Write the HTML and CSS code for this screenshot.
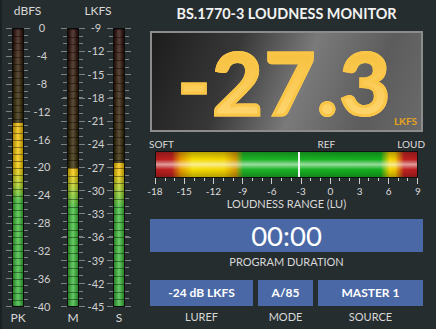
FILE: index.html
```html
<!DOCTYPE html>
<html lang="en">
<head>
    <meta charset="UTF-8">
    <title>Loudness Monitor</title>
    <link rel="stylesheet" href="styles.css">
</head>
<body>
    <div class="meters">
        <div class="meter-head head-db">dBFS</div>
        <div class="meter-head head-lk">LKFS</div>

        <div class="ticks ticks-left db"></div>
        <div class="bar db"><div class="fill" style="height: 66%"></div></div>
        <div class="ticks ticks-right db"></div>
        <div class="scale">
            <span>0</span><span>-4</span><span>-8</span><span>-12</span><span>-16</span><span>-20</span>
            <span>-24</span><span>-28</span><span>-32</span><span>-36</span><span>-40</span>
        </div>

        <div class="gap"></div>

        <div class="ticks ticks-left lk"></div>
        <div class="bar lk"><div class="fill" style="height: 50%"></div></div>
        <div class="ticks ticks-right lk"></div>
        <div class="scale">
            <span>-9</span><span>-12</span><span>-15</span><span>-18</span><span>-21</span><span>-24</span><span>-27</span>
            <span>-30</span><span>-33</span><span>-36</span><span>-39</span><span>-42</span><span>-45</span>
        </div>
        <div class="ticks ticks-left lk"></div>
        <div class="bar lk"><div class="fill" style="height: 51.7%"></div></div>
        <div class="ticks ticks-right lk"></div>

        <div class="meter-foot foot-pk">PK</div>
        <div class="meter-foot foot-m">M</div>
        <div class="meter-foot foot-s">S</div>
    </div>

    <div class="panel">
        <h1 class="title">BS.1770-3 LOUDNESS MONITOR</h1>

        <div class="readout">
            <span class="value">-27.3</span>
            <span class="unit">LKFS</span>
        </div>

        <div class="range">
            <div class="range-marks">
                <span>SOFT</span>
                <span class="mark-ref">REF</span>
                <span>LOUD</span>
            </div>
            <div class="range-bar">
                <div class="ref-line"></div>
            </div>
            <div class="range-ticks"></div>
            <div class="range-scale">
                <span>-18</span><span>-15</span><span>-12</span><span>-9</span><span>-6</span>
                <span>-3</span><span>0</span><span>3</span><span>6</span><span>9</span>
            </div>
            <div class="caption">LOUDNESS RANGE (LU)</div>
        </div>

        <div class="field">
            <div class="box box-large">00:00</div>
            <div class="caption">PROGRAM DURATION</div>
        </div>

        <div class="settings">
            <div class="field">
                <div class="box">-24 dB LKFS</div>
                <div class="caption">LUREF</div>
            </div>
            <div class="field">
                <div class="box">A/85</div>
                <div class="caption">MODE</div>
            </div>
            <div class="field">
                <div class="box">MASTER 1</div>
                <div class="caption">SOURCE</div>
            </div>
        </div>
    </div>
</body>
</html>
```

FILE: styles.css
```css
body {
    margin: 0;
    width: 436px;
    height: 329px;
    overflow: hidden;
    display: flex;
    background-color: #262d2f;
    font-family: 'Lato', 'Open Sans', sans-serif;
    color: #d8d8d8;
}

/* ---- level meters ---- */

.meters {
    width: 150px;
    box-sizing: border-box;
    padding-left: 4px;
    border-left: 2px solid #1b2022;
    display: grid;
    grid-template-columns: 6px 12px 6px 24px 7px 6px 12px 6px 22px 6px 12px 6px;
    grid-template-rows: 28px 279px 1fr;
}

.meter-head {
    grid-row: 1;
    font-size: 12px;
    line-height: 14px;
    padding-top: 4px;
    text-align: center;
    color: #d8d8d8;
}

.head-db {
    grid-column: 1 / 5;
    padding-right: 5px;
}

.head-lk {
    grid-column: 6 / 13;
    padding-left: 4px;
}

.meter-foot {
    grid-row: 3;
    font-size: 12px;
    line-height: 22px;
    text-align: center;
}

.foot-pk { grid-column: 1 / 4; }
.foot-m { grid-column: 6 / 9; }
.foot-s { grid-column: 10 / 13; }

.gap {
    grid-row: 2;
}

.db { --step: 6.95px; --major: 27.8px; }
.lk { --step: 7.7222px; --major: 23.1667px; }

.ticks {
    grid-row: 2;
    background-image:
        repeating-linear-gradient(#7c8283 0 1px, transparent 1px var(--major)),
        repeating-linear-gradient(#7c8283 0 1px, transparent 1px var(--step));
    background-repeat: no-repeat;
    background-size: 6px 100%, 4px 100%;
}

.ticks-left {
    background-position: right top, right top;
}

.ticks-right {
    background-position: left top, left top;
}

.scale {
    grid-row: 2;
    margin: -6px 0;
    display: flex;
    flex-direction: column;
    justify-content: space-between;
    font-size: 11px;
    line-height: 12px;
    text-align: center;
    color: #d0d0d0;
}

.bar {
    grid-row: 2;
    position: relative;
    display: flex;
    flex-direction: column;
    justify-content: flex-end;
    box-sizing: border-box;
    border: 1px solid #0c0c0c;
    --scale: linear-gradient(#d42a18 0%, #e87a10 12%, #f2b400 24%, #f8cc00 50%, #b8d820 56%, #40c038 62%, #36b838 100%);
    background: linear-gradient(rgba(0, 0, 0, 0.8), rgba(0, 0, 0, 0.8)), var(--scale);
}

.bar.lk {
    --scale: linear-gradient(#d42a18 0%, #e87a10 22%, #f2b000 44%, #f8cc00 52%, #a8d428 58%, #40c038 64%, #36b838 100%);
}

.bar .fill {
    background: var(--scale) bottom / 100% 277px no-repeat;
}

.bar::after {
    content: '';
    position: absolute;
    inset: 0;
    background:
        repeating-linear-gradient(rgba(0, 0, 0, 0.4) 0 1px, transparent 1px var(--step)),
        linear-gradient(to right, rgba(0, 0, 0, 0.3), rgba(255, 255, 255, 0.22) 50%, rgba(0, 0, 0, 0.3));
}

/* ---- right panel ---- */

.panel {
    width: 273px;
    display: flex;
    flex-direction: column;
}

.title {
    margin: 0;
    height: 31px;
    line-height: 27px;
    font-size: 14.4px;
    font-weight: 700;
    text-align: center;
    color: #f2f2f2;
}

.readout {
    position: relative;
    height: 101px;
    box-sizing: border-box;
    border: 2px solid #8c8c8c;
    background: linear-gradient(110deg, #1c1c1c 0%, #383838 30%, #7a7a7a 55%, #5c5c5c 80%, #6a6a6a 100%);
    display: flex;
    align-items: center;
    justify-content: center;
}

.value {
    font-size: 87px;
    font-weight: 700;
    line-height: 1;
    letter-spacing: 2px;
    margin-right: 3px;
    background: linear-gradient(#f6bd36, #ffd874);
    -webkit-background-clip: text;
    background-clip: text;
    color: transparent;
    -webkit-text-stroke: 3px #f9c648;
}

.unit {
    position: absolute;
    right: 4px;
    bottom: 3px;
    font-size: 10px;
    font-weight: 700;
    color: #e6a31c;
}

.range {
    margin-top: 5px;
    display: flex;
    flex-direction: column;
}

.range-marks {
    display: flex;
    margin: 0 -2px 0 -1px;
    font-size: 10px;
    line-height: 14px;
    color: #dcdcdc;
}

.mark-ref {
    margin-left: auto;
    margin-right: 62px;
}

.range-bar {
    position: relative;
    margin: 0 5px;
    height: 27px;
    box-sizing: border-box;
    border: 1px solid #111;
    background:
        linear-gradient(rgba(0, 0, 0, 0.25) 0%, rgba(255, 255, 255, 0) 30%, rgba(255, 255, 255, 0.55) 50%, rgba(255, 255, 255, 0) 70%, rgba(0, 0, 0, 0.25) 100%),
        linear-gradient(to right, #b81e1e 0%, #c02222 6%, #e89a00 9.5%, #f4dc00 14%, #f2d400 26%, #d49a08 30.5%, #1eb428 33.5%, #14b020 86%, #f0d400 89.5%, #f0c800 91.6%, #c02222 95%, #b81e1e 100%);
}

.ref-line {
    position: absolute;
    top: 0;
    bottom: 0;
    left: 142px;
    width: 2px;
    background-color: #f4f4f4;
}

.range-ticks {
    margin: 0 5px;
    height: 7px;
    background-image:
        repeating-linear-gradient(to right, #cfcfcf 0 1px, transparent 1px 29.11px),
        repeating-linear-gradient(to right, #cfcfcf 0 1px, transparent 1px 9.7037px);
    background-repeat: no-repeat;
    background-size: 100% 6px, 100% 3px;
}

.range-scale {
    display: flex;
    justify-content: space-between;
    margin: 0 -5px;
    font-size: 10px;
    line-height: 12px;
    color: #dcdcdc;
}

.range-scale span {
    width: 20px;
    text-align: center;
}

.caption {
    font-size: 11px;
    line-height: 14px;
    text-align: center;
    color: #d8d8d8;
}

.field {
    display: flex;
    flex-direction: column;
}

.box {
    height: 26px;
    line-height: 26px;
    background-color: #4a68a6;
    color: #ffffff;
    font-size: 12px;
    font-weight: 700;
    text-align: center;
    margin-bottom: 4px;
}

.box-large {
    margin-top: 8px;
    height: 33px;
    line-height: 33px;
    font-size: 27.5px;
    font-weight: 400;
    margin-bottom: 3px;
}

.settings {
    margin-top: 11px;
    display: grid;
    grid-template-columns: 103px 55px 1fr;
    gap: 5px;
}
```
